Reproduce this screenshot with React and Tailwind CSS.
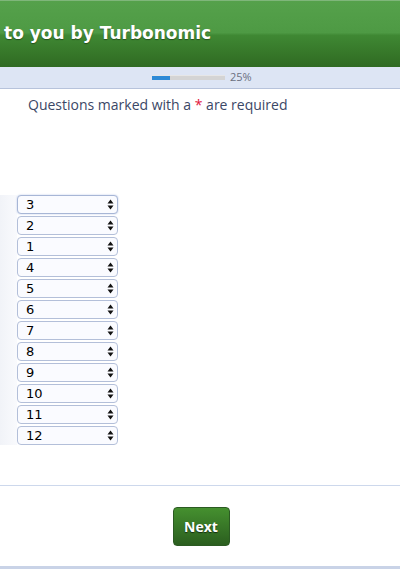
import React from "react";

const ranks = [3, 2, 1, 4, 5, 6, 7, 8, 9, 10, 11, 12];

const Arrows = () => (
  <svg width="7" height="11" viewBox="0 0 7 11" className="shrink-0">
    <path d="M3.5 0.5 L6.5 4.5 L0.5 4.5 Z" fill="#111" />
    <path d="M3.5 10.5 L6.5 6.5 L0.5 6.5 Z" fill="#111" />
  </svg>
);

const RankSelect = ({ value, first }) => (
  <div
    className={`flex items-center justify-between w-[101px] h-[19px] pl-[8px] pr-[3px] rounded-[4px] border bg-[#fafbff] text-[14px] leading-none text-black ${
      first ? "border-[#a7b6d6] shadow-[0_0_2px_#b8c6e6]" : "border-[#b3bfd9]"
    }`}
    style={{ fontFamily: "'DejaVu Sans', sans-serif", fontSize: "13px" }}
  >
    <span>{value}</span>
    <Arrows />
  </div>
);

export default function App() {
  return (
    <div className="w-[400px] h-[569px] bg-white overflow-hidden flex flex-col" style={{ fontFamily: "'Open Sans', 'DejaVu Sans', sans-serif" }}>
      {/* header */}
      <div className="h-[67px] border-t border-[#7fb67a] bg-[linear-gradient(to_bottom,#55a14b_0%,#4e9a44_48%,#3f8833_52%,#2f6a22_100%)] flex items-center pl-[4px]">
        <span className="text-white font-bold text-[17px] pb-[1px] [text-shadow:0_1px_1px_rgba(0,0,0,0.4)]" style={{ fontFamily: "'DejaVu Sans', sans-serif" }}>
          to you by Turbonomic
        </span>
      </div>

      {/* progress */}
      <div className="h-[22px] bg-[#dde5f4] border-b border-[#b7c3db] flex items-center pl-[152px] gap-[5px]">
        <div className="w-[73px] h-[5px] bg-[#d4d4d4] border-t border-[#e6e6e6] flex">
          <div className="w-[18px] h-full bg-[#2e8ad6]" />
        </div>
        <span className="text-[11px] text-[#6b7080]">25%</span>
      </div>

      <div className="pl-[28px] pt-[5px] text-[14px] text-[#3b4766]">
        Questions marked with a <span className="text-[#e0143c]">*</span> are required
      </div>

      {/* rank list */}
      <div className="mt-[80px] flex">
        <div className="w-[17px] bg-[linear-gradient(to_right,#f1f3f8,#f9fafd)]" />
        <div className="flex flex-col gap-[2px] bg-white">
          {ranks.map((r, i) => (
            <RankSelect key={r} value={r} first={i === 0} />
          ))}
        </div>
      </div>

      <div className="mt-[40px] border-t border-[#cdd8ec]" />

      <div className="flex justify-center pt-[21px] pl-[2px]">
        <button className="w-[57px] h-[39px] rounded-[4px] border border-[#2b5a22] bg-[linear-gradient(to_bottom,#45902f,#2b5e1f)] text-white font-bold text-[14px] [text-shadow:0_1px_1px_rgba(0,0,0,0.6)]">
          Next
        </button>
      </div>

      <div className="mt-auto h-[3px] bg-[#c9d3e7]" />
    </div>
  );
}
